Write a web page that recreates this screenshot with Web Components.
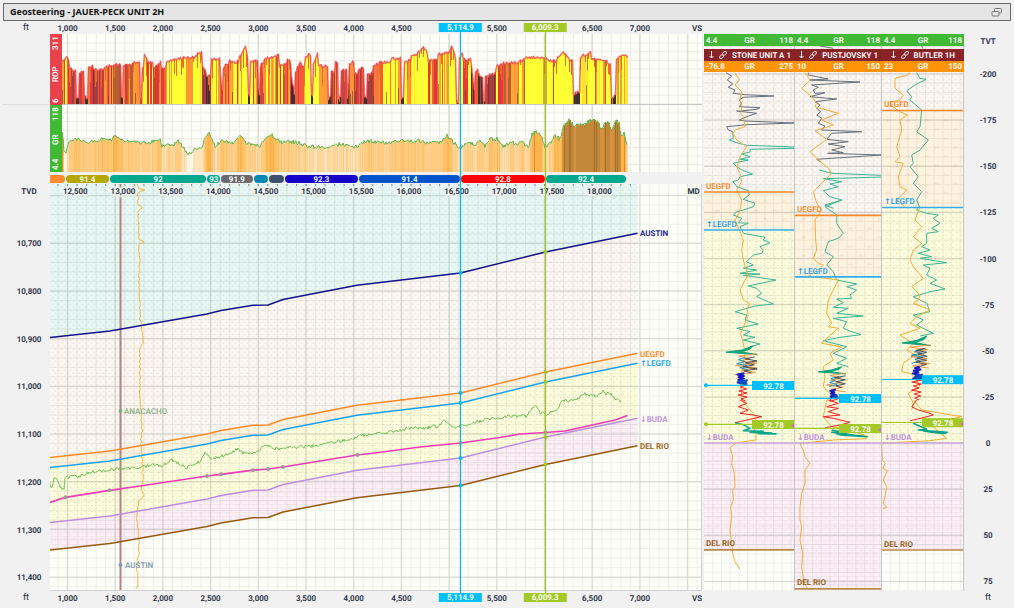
<!DOCTYPE html>
<html lang="en">
<head>
<meta charset="utf-8">
<title>Geosteering - JAUER-PECK UNIT 2H</title>
<style>
  body { margin: 0; background: #f1f1f1; color: #1d2b3e; font-family: Roboto, "Liberation Sans", sans-serif; font-size: 8px; font-weight: 600; text-rendering: geometricPrecision; }
</style>
</head>
<body>
<geo-app></geo-app>
<script>
/* ---------- helpers ---------- */
const f = n => +n.toFixed(1);
function rng(seed) { let s = seed; return () => (s = (s * 16807) % 2147483647) / 2147483647; }
const line = pts => pts.map((p, i) => (i ? 'L' : 'M') + f(p[0]) + ' ' + f(p[1])).join('');
const pairs = s => { const a = s.trim().split(/[\s,]+/).map(Number), o = []; for (let i = 0; i < a.length; i += 2) o.push([a[i], a[i + 1]]); return o; };
const path = (d, color, w = 1, extra = '') => `<path d="${d}" fill="none" stroke="${color}" stroke-width="${w}" vector-effect="non-scaling-stroke" stroke-linejoin="round" ${extra}/>`;
/* value of a polyline at x */
function at(pts, x) {
  for (let i = 1; i < pts.length; i++) if (x <= pts[i][0]) {
    const [a, b] = [pts[i - 1], pts[i]]; return a[1] + (b[1] - a[1]) * (x - a[0]) / (b[0] - a[0] || 1);
  }
  return pts[pts.length - 1][1];
}
/* resample with jitter, along x or along y */
function rough(pts, step, amp, seed, vertical) {
  const r = rng(seed), src = vertical ? pts.map(p => [p[1], p[0]]) : pts, out = [];
  for (let x = src[0][0]; x <= src[src.length - 1][0]; x += step) out.push([x, at(src, x) + (r() - .5) * 2 * amp]);
  return vertical ? out.map(p => [p[1], p[0]]) : out;
}
const gridLines = (x, y, w, h, xs, ys) => {
  let d = '';
  for (const v of xs) d += `M${f(v)} ${y}V${y + h}`;
  for (const v of ys) d += `M${x} ${f(v)}H${x + w}`;
  return d;
};
const series = (a, b, n) => { const o = []; for (let v = a; v < b; v += n) o.push(v); return o; };
/* a chart: stretched drawing plus texts placed in percent, so they keep their shape */
function chart([x, y, w, h], art, texts = []) {
  const py = v => ((v - y) / h * 100).toFixed(2) + '%';
  const arrow = s => s.replace(/[↑↓]/, m => `<tspan class="ar">${m}</tspan>`);
  const t = texts.map(o => `<text x="${((o.x - x) / w * 100).toFixed(2)}%" y="${py(o.y)}" dy="3" fill="${o.c || '#1d2b3e'}" text-anchor="${o.a || 'middle'}" ${o.e || ''}>${arrow(o.t)}</text>`).join('');
  return `<svg width="100%" height="100%"><svg width="100%" height="100%" viewBox="${x} ${y} ${w} ${h}" preserveAspectRatio="none">${art}</svg>${t}</svg>`;
}
const patterns = `<defs>
  <pattern id="dash" width="6" height="6" patternUnits="userSpaceOnUse"><path d="M0 1.5h3M3 4.5h3M1.5 0v1.5M4.5 3v1.5" stroke="#7d8a88" stroke-opacity=".1" stroke-width=".8"/></pattern>
  <pattern id="sand" width="7" height="6" patternUnits="userSpaceOnUse"><path d="M0 1.5h2M4 4.5h2M4 1.5h1" stroke="#857c50" stroke-opacity=".18" stroke-width=".8"/></pattern>
  <pattern id="tick" width="19" height="18" patternUnits="userSpaceOnUse"><path d="M4 5v-2h3v2M13 14v-2h3v2" fill="none" stroke="#85806a" stroke-opacity=".18" stroke-width=".8"/></pattern>
  <pattern id="brick" width="9" height="8" patternUnits="userSpaceOnUse"><path d="M0 .5h9M0 4.5h9M2 .5v4M6.500 4.5v4" stroke="#a08f9c" stroke-opacity=".13" stroke-width=".8"/></pattern>
</defs>`;
const FILL = { teal: '#e7f8f4', austin: '#fdf6f1', uegfd: '#fff2de', legfd: '#fefddd', buda: '#fdeff5', none: '#fffff9' };
const base = `<style>:host{display:block;min-width:0;min-height:0}svg{display:block;overflow:hidden}text{font:inherit}.ar{font-family:"DejaVu Sans",sans-serif}</style>`;
/* a chart element takes the size of its grid cell, never of its drawing */
const fillCell = '<style>:host{contain:size}</style>';
function define(name, render) {
  customElements.define(name, class extends HTMLElement {
    constructor() { super(); this.attachShadow({ mode: 'open' }); }
    connectedCallback() { this.shadowRoot.innerHTML = base + render(this); }
  });
}

/* ---------- title bar ---------- */
define('title-bar', () => `<style>
  :host{display:flex;align-items:center;justify-content:space-between;height:16px;margin:0 1px;padding:0 7px 0 6px;border:1px solid #6a6a6a;background:#e5e5e5;color:#111}
  h1{margin:0;font:bold 9px/16px "Noto Sans",sans-serif;text-rendering:auto}
  button{all:unset;display:block;width:12px;height:12px;cursor:pointer}
  </style><h1><slot></slot></h1>
  <button type="button" aria-label="Restore window"><svg viewBox="0 0 12 12" width="12" height="12" fill="#e5e5e5" stroke="#777"><rect x="3.500" y="2.500" width="7" height="4.500" rx="1"/><rect x="1" y="5.500" width="7" height="4.500" rx="1"/></svg></button>`);

/* ---------- vertical section axis ---------- */
define('vs-axis', () => {
  const texts = [];
  /* the values under the two cursor chips are left out */
  for (let i = 0; i < 13; i++) if (i !== 8 && i !== 10) texts.push({ x: 67.5 + i * 47.7, y: 28, t: (1000 + i * 500).toLocaleString('en-US') });
  texts.push({ x: 697, y: 28, t: 'VS' });
  return fillCell + `<style>:host{position:relative}
    b{position:absolute;top:2px;width:6.5%;height:9px;line-height:10px;transform:translateX(-50%);text-align:center;color:#fff;font-weight:600}
    .a{left:62.95%;background:#00bfff}.b{left:75.95%;background:#a3c926}</style>`
    + chart([50, 21, 652, 13], '', texts) + `<b class="a">5,114.9</b><b class="b">6,009.3</b>`;
});

/* ---------- left scale strip of a curve track ---------- */
define('curve-track', el => `<style>
  :host{display:grid;grid-template-columns:12px minmax(0,1fr)}
  .s{display:flex;justify-content:space-between;writing-mode:vertical-rl;transform:rotate(180deg);color:#fff;line-height:12px;padding:2px 0;background:${el.getAttribute('color')}}
  </style><div class="s"><span>${el.getAttribute('min')}</span><span>${el.getAttribute('name')}</span><span>${el.getAttribute('max')}</span></div>
  <slot></slot>`);

const majors = series(67.5, 702, 47.7), minors = series(58, 702, 9.54);
const trackGrid = (y, h, ys) => `<rect x="62" y="${y}" width="640" height="${h}" fill="#fffff9"/>`
  + path(gridLines(62, y, 640, h, minors, ys), '#ebebe4') + path(gridLines(62, y, 640, h, majors, []), '#dcdcd8', 1.5);

define('rop-plot', () => {
  /* from x, top at start, top at end, shade: y yellow, o orange, r red, d dark red, k black */
  const S = `62 61 58 oyr|65 57 60 ory|69 69 70 r|72 70 70 rd|76 98 96 k|79 73 70 rk|84 97 98 k|88 68 66 or|93 70 69 dr|104 68 64 ro|110 66 64 rdo|121 98 95 k|123 65 63 oro|130 64 61 o|140 98 88 r|142 68 64 oy|144 53 60 y|147 61 64 ory|153 68 62 oyr|161 69 67 or|166 62 59 yyo|176 59 57 y|186 58 57 yyyo|195 56 51 y|202 67 72 dr|206 76 74 kd|211 60 59 y|220 76 98 rk|223 67 62 or|229 60 64 yro|234 63 61 rory|239 57 46 y|246 52 60 y|248 94 97 k|250 63 60 ryo|258 88 99 k|260 66 61 r|263 62 54 oy|268 58 55 yo|279 66 62 yor|287 60 62 ro|291 78 99 k|295 72 63 rd|299 62 68 ro|305 58 53 y|309 54 60 y|311 96 98 k|313 64 51 y|318 65 64 yo|322 67 65 yoo|328 99 96 k|331 72 72 dr|335 62 64 or|338 98 96 k|341 70 69 rd|347 97 69 k|349 63 62 o|354 74 73 dr|358 69 68 dr|364 98 98 k|367 74 73 d|373 66 62 or|380 62 63 oyr|391 59 58 oy|401 99 98 k|404 63 59 ryo|411 57 53 y|417 53 46 y|424 48 55 y|428 62 58 yor|438 54 53 yyo|449 52 43 y|452 48 60 y|456 101 102 k|459 57 53 yo|463 60 59 yr|471 66 98 rk|475 71 68 r|478 74 79 kd|483 101 98 k|485 76 75 d|490 74 73 dkr|496 66 63 ory|504 63 63 o|519 62 58 yo|525 58 57 y|536 58 58 y|547 59 62 y|552 61 62 oyr|557 57 51 y|563 53 58 y|569 60 62 y|573 96 94 k|575 93 91 k|580 57 52 y|591 59 60 yo|600 60 62 yyo|608 63 64 y|611 98 95 k|616 58 55 y|624 55 58 yyo`.split('|').map(s => s.split(' '));
  const C = { y: ['#ffff33', '#ffff33', '#ffff33', '#ffff33', '#ffff33', '#ffff33', '#ffff33', '#ffe033', '#e3a43a'], o: ['#ff9433', '#ffa03a', '#f87c38', '#ffb03a', '#ff9433', '#b5602f'], r: ['#e8383c', '#f25a3a', '#d83a3a', '#e04040'], d: ['#b03a3a', '#a04040', '#c94444', '#7a3636'], k: ['#333', '#403030', '#4b3030'] };
  const r = rng(77); let bars = '', top = [];
  S.forEach((s, i) => {
    const x0 = +s[0], x1 = i + 1 < S.length ? +S[i + 1][0] : 628;
    let c = '';
    for (let x = x0; x < x1; x++) {
      const y = +s[1] + (s[2] - s[1]) * (x - x0) / (x1 - x0) + (r() - .5) * 3;
      /* neighbouring samples often share one shade */
      if (!c || r() < .6) { const sh = C[s[3][Math.floor(r() * s[3].length)]]; c = sh[Math.floor(r() * sh.length)]; }
      bars += `<rect x="${x}" y="${f(y)}" width="1.050" height="${f(105 - y)}" fill="${c}"/>`;
      if (r() < .2) bars += `<rect x="${x}" y="${f(y)}" width="1" height="${f(5 + r() * 14)}" fill="#ee6a33"/>`;
      if (r() < .03 && y < 90) bars += `<rect x="${x}" y="${f(y + 30)}" width="1" height="${f(75 - y)}" fill="#5a4030" opacity=".6"/>`;
      top.push([x + .5, y]);
    }
  });
  return fillCell + chart([62, 34, 640, 71], trackGrid(34, 71, series(43, 104, 8.7)) + `<g shape-rendering="crispEdges">${bars}</g>`
    + path(line(top), '#ec4a4e', 1.5, 'opacity=".8"') + path('M62 104.500H702', '#c4c4c4'));
});

define('gr-plot', () => {
  const P = pairs(`62 134 63 140 64 150 65.500 155 67 146 70 142 75 139 85 142 95 141 104 138 112 139 115 136 120 140 130 141 137 142 145 143 155 141 160 139 162 146 175 144 178 140 182 146 188 155 193 150 202 148 206 135 209 134 215 146 222 141 232 143 240 137 248 144 256 145 260 146 266 137 271 134 280 142 290 142 300 143 310 147 325 147 340 144 355 147 365 142 372 141 385 143 393 142 405 141 420 141 428 143 440 142 447 136 452 141 458 147 461 147 466 143 475 144 480 140 485 147 490 139 497 139 503 147 512 142 517 145 521 141 528 148 532 135 536 131 541 136 545 147 550 143 555 136 560 139 563 128 569 119 574 127 580 124 590 121 592 119 598 122 601 129 607 120 612 130 616 120 619 124 621 136 624 133 627 143`);
  const pts = rough(P, 1, 2, 9), r = rng(5);
  const bars = pts.map(([x, y]) => {
    const v = y + (r() - .5) * 3;
    const c = v > 151 ? '#fff5e6' : v > 147 ? '#ffe3ba' : v > 143.5 ? '#ffd699' : v > 140 ? '#ffcb80' : v > 137 ? '#ffc067' : v > 132 ? '#fdb44b' : v > 126 ? '#d4913f' : r() < .2 ? '#a3702d' : '#c3873a';
    return `<rect x="${x}" y="${f(y)}" width="1.050" height="${f(172 - y)}" fill="${c}"/>`;
  }).join('');
  return fillCell + chart([62, 105, 640, 67], trackGrid(105, 67, series(113, 171, 8.6)) + `<g shape-rendering="crispEdges">${bars}</g>`
    + path(line(pts), '#5fb84c', 1));
});

/* ---------- dip ribbon ---------- */
define('dip-ribbon', () => {
  const seg = [[15, '#ff8c2e', ''], [44, '#b3a700', '91.4'], [98, '#00a98d', '92'], [13, '#00a98d', '93'], [32, '#6a6a6e', '91.9'], [15, '#0089b5', ''], [15, '#3b5169', ''], [74, '#1405c8', '92.3'], [103, '#0054c9', '91.4'], [85, '#f00', '92.8'], [82, '#00a98d', '92.4'], [75, 'none', '']];
  return `<style>:host{display:flex;padding:3px 0 1px;overflow:hidden}
    span{flex-basis:0;min-width:0;height:8px;line-height:9px;color:#fff;text-align:center;border-radius:4px;margin-right:1px;white-space:nowrap}
    span:first-of-type{border-radius:0 4px 4px 0}</style>`
    + seg.map(s => `<span style="flex-grow:${s[0]};background:${s[1]}">${s[2]}</span>`).join('');
});

/* ---------- cross section ---------- */
define('cross-section', () => {
  const A = pairs(`50 337.500 110 331 207 314 221 310.500 253 305.300 268 305 283 299.500 357 285.300 460.500 273 545.500 252 637.500 233.300`);
  const sh = d => A.map(p => [p[0], p[1] + d]);
  const band = (a, b, c, pat) => { const d = line(a.concat([...b].reverse())) + 'Z'; return `<path d="${d}" fill="${c}"/><path d="${d}" fill="url(#${pat})"/>`; };
  const U = sh(120), L = sh(130), B = sh(185), D = sh(212.5);
  const well = pairs(`50 502.500 65.500 497.300 110 490.300 140 486 207 476 221 474.300 253 470.200 268 469 283 467 357 455 375 453 420 447 460.500 443 500 437.500 520 434 545.500 432.500 565 431 590 425.500 615 420 627.500 415.500`);
  const gr = pairs(`50 485 52 489 54 478 56 478 60 487 64 489 65 478 70 477 80 476 90 472 100 471 115 469 130 468 143 467 155 464 162 466 172 460 180 464 187 468 195 463 200 462 205 452 212 459 222 456 230 454 237 449 243 453 256 453 263 446 267 445 275 449 290 447 305 447 325 444 338 441 352 440 358 436 370 434 385 433 397 431 410 428 425 428 437 426 445 421 455 428 460 426 470 424 480 421 490 418 500 419 510 416 520 416 527 416 531 410 534 405 540 412 546 415 552 411 558 408 562 400 570 401 578 398 585 394 592 396 600 395 603 391 606 395 608 391 615 399 621 401`);
  const off = pairs(`138 184 139 189 145 190 138 192 138 205 143 207 138 211 139 240 146 242 139 244 139 250 140 265 139 275 140 320 142 330 143 344 140 347 140 400 142 430 141 440 143 470 140 473 144 474 141 490 144 496 139 500 137 510 138 530 139 550 137 570 138 587 135 590`);
  const ys = series(195.6, 591, 9.54), yM = series(195.6, 591, 47.7);
  let ticks = ''; for (const x of minors) if (x < 632) ticks += `M${f(x)} 184v2`;
  const dots = (pts, c) => pts.map(p => path(`M${p[0]} ${p[1]}h.01`, c, 4, 'stroke-linecap="round"')).join('');
  const art = patterns + `<rect x="50" y="184" width="652" height="407" fill="${FILL.none}"/>`
    + band([[50, 184], [637.5, 184]], A, FILL.teal, 'dash') + band(A, U, FILL.austin, 'dash') + band(U, L, FILL.uegfd, 'tick') + band(L, B, FILL.legfd, 'sand') + band(B, D, FILL.buda, 'brick')
    + path(gridLines(50, 184, 652, 407, minors, ys), '#64706a', 1, 'opacity=".1"') + path(gridLines(50, 184, 652, 407, majors, yM), '#64706a', 1.5, 'opacity=".15"')
    + path(ticks, '#888')
    + path('M120.500 184V591', '#b98080', 2)
    + path(line(rough(off, 1.5, .8, 31, true)), '#f9b13c') + path(line(rough(gr, 1, 1.6, 12)), '#74c461')
    + path(line(A), '#12128a', 1.5) + path(line(U), '#f98a2c', 1.5) + path(line(L), '#18a3f0', 1.5) + path(line(B), '#bd8ee0', 1.5) + path(line(D), '#96590f', 1.5)
    + path(line(well), '#f03cb4', 1.7)
    + dots(pairs('65.5 497.3 109.5 490.3 207 476 221 474.3 253 470.2 268 469 283 467 357.5 455 460.5 443 545.5 432.5'), '#999')
    + dots([273, 393, 403, 458, 485.5].map(y => [460.5, y]), '#00bfff') + dots([252, 372, 382, 437, 464.5].map(y => [545.5, y]), '#a3c926')
    + dots([[120.5, 411]], '#7fae7f') + dots([[120.5, 565]], '#8499b5') + path('M50 590.500H702M701.500 184V591', '#d0d0d0');
  const halo = 'stroke="#eff3ee" stroke-opacity=".8" stroke-width="4" stroke-linejoin="round" paint-order="stroke"';
  const texts = [];
  for (let i = 0; i < 12; i++) texts.push({ x: 75.3 + i * 47.65, y: 191, t: (12500 + i * 500).toLocaleString('en-US'), e: halo });
  texts.push({ x: 693.5, y: 191, t: 'MD', e: halo },
    { x: 640, y: 233.5, t: 'AUSTIN', c: '#12128a', a: 'start' }, { x: 640, y: 353.5, t: 'UEGFD', c: '#f98a2c', a: 'start' },
    { x: 640, y: 363.5, t: '↑LEGFD', c: '#18a3f0', a: 'start' }, { x: 640, y: 418.5, t: '↓BUDA', c: '#bd8ee0', a: 'start' },
    { x: 640, y: 446, t: 'DEL RIO', c: '#96590f', a: 'start' }, { x: 124, y: 411, t: 'ANACACHO', c: '#8fb38f', a: 'start' }, { x: 125, y: 565.5, t: 'AUSTIN', c: '#8499b5', a: 'start' });
  return fillCell + chart([50, 184, 652, 407], art, texts);
});

define('tvd-axis', () => {
  const texts = [{ x: 29, y: 191, t: 'TVD' }];
  for (let i = 0; i < 8; i++) texts.push({ x: 29, y: 243.3 + i * 47.7, t: (10700 + i * 100).toLocaleString('en-US') });
  return fillCell + chart([2, 184, 48, 407], '', texts);
});
define('tvt-axis', () => {
  const texts = [{ x: 988, y: 41, t: 'TVT' }];
  for (let i = 0; i < 12; i++) texts.push({ x: 988, y: 74 + i * 46.13, t: String(-200 + i * 25) });
  return fillCell + chart([964, 34, 48, 557], '', texts);
});
define('axis-unit', () => `<style>:host{padding-top:2px;line-height:10px;font-size:9px;font-weight:400;text-align:center}</style><slot></slot>`);

/* cursors run across every row of the plot column */
define('depth-cursors', () => fillCell + `<style>:host{pointer-events:none}</style>`
  + chart([50, 21, 652, 587], path('M460.500 32V595', '#00b4f5', 1.2) + path('M545.500 32V595', '#9cc41f', 1.2)));

/* ---------- type logs ---------- */
/* samples are in thirds of a unit; each piece starts at its own depth origin */
const LOGS = {
  stone: { x: 704, w: 91, marks: [192, 230, 443, 549.8], cur: [385.3, 424.3], box: 752, dot: true,
    grey: [[0, '78,218 95,228 82,240 98,252 85,262 105,270 100,280 135,284 222,288 130,292 118,300 125,310 118,320 180,323 170,328 115,334 110,333 170,340 145,348 118,360 135,363 283,369 140,374 80,380 85,390 98,395']],
    teal: [[0, '98,395 100,415 88,420 110,428 140,436 283,441 283,445 150,448 150,456 125,462 150,470 120,478 145,480 100,490 110,500 130,512 158,522 120,530 115,540 98,545 105,552 110,560 145,572 148,585 130,598 165,610 160,620 130,630'], [200, '130,30 110,35 100,45 125,55 115,68 145,70 120,80 125,90 130,100 195,112 190,120 210,128 180,140 190,150 185,160 160,165 140,185 160,195 130,205 170,210 120,220 180,222 130,226 228,240 145,258 170,265 185,280 170,290 220,312 165,318 105,335 140,345 135,360 175,372 110,385 150,395 130,405 165,412 130,420 180,432 150,440']],
    mix: [78, 172, 138, 438, 555, 112, 150], red: '120,0 140,10 115,20 145,30 120,40 160,45 185,50 150,58 105,68', tail: '105,68 130,74 150,85 130,92 190,94 150,97 228,102 175,101 215,99 180,97 230,102',
    orange: [[0, '105,218 118,240 105,255 125,275 120,300 125,320 122,340 130,350 135,380 105,390 100,400 110,420 140,440 120,470 115,490 110,500 120,520 125,545 110,570 125,600 120,630'], [200, '122,30 105,60 118,90 130,120 125,150 130,180 140,215 145,225 135,240 120,270 130,300 150,312 140,325 145,345 135,370 122,400 130,430 135,460 130,500 120,540 125,580'], [400, '125,-20 125,0 150,30 168,50 160,80 168,100 168,120 110,128 90,143 98,170 95,190 103,220 105,260 98,268 100,300 92,320 95,350 90,390 95,430 98,460 105,485 120,508']] },
  push: { x: 795, w: 87, marks: [215.3, 276.8, 443, 588.8], cur: [398.3, 428.3], box: 839,
    grey: [[0, '360,138 400,145'], [0, '325,218 325,225 385,237 330,240 480,246 335,255 355,262 340,270 345,280 375,278 330,290 410,297 345,305 360,315 350,325 362,335 350,345 365,355 355,370 375,378 365,390 485,395 395,400 380,418 445,425 385,432 435,440 395,450 430,458 383,460 545,465 350,478 365,488']],
    teal: [[0, '358,510 395,520 545,526 545,531 370,536 425,545 390,552 415,560 370,572 390,590 425,600 375,615 400,625'], [200, '425,0 375,20 410,45 410,70 430,100 415,115 385,125 375,155 400,170 380,195 400,215 410,240 470,252 440,260 470,270 450,285 455,295 410,297 430,308 400,322 445,325 410,340 490,348 400,355 440,365 430,385 455,395 483,404 420,412 370,422 440,440 400,460 440,475 410,490 445,500']],
    mix: [355, 438, 405, 500, 598, 376, 415], red: '385,0 415,10 380,20 415,25 385,35 420,45 370,50 400,55 450,67 420,75 375,83', tail: '395,90 440,100 395,97 500,110 420,105 490,108 410,102 470,107',
    orange: [[0, '315,218 330,240 305,265 335,290 350,310 345,320 415,340 365,360 400,375 345,392 380,418 330,455 350,475 385,505 395,520 340,575 350,610 365,630'], [200, '365,30 345,60 347,120 350,150 340,175 355,190 370,195 360,205 325,228 415,240 405,260 385,300 380,340 395,370 385,380 415,385 380,415 365,430 425,440 390,460 400,480 370,500 375,530 370,560 400,590'], [400, '390,-10 380,0 370,50 395,80 450,90 505,110 500,116 400,120 320,128 300,132 310,150 315,170 330,190 315,210 315,250 305,280 300,320 300,360 305,380 300,420 308,460 305,500 312,550 328,570']] },
  butler: { x: 882, w: 82, marks: [110.5, 207.5, 443, 550], cur: [379.5, 422.5], box: 922,
    grey: [[0, '665,138 668,145']],
    teal: [[0, '650,218 660,235 678,238 645,255 620,272 635,290 630,300 665,330 660,380 650,395 685,420 660,450 635,465 640,490 630,500 655,530 640,550 665,575 650,600 660,625'], [200, '655,20 650,30 680,40 715,45 700,55 720,70 695,85 715,95 680,100 680,130 665,140 690,150 655,160 695,170 660,175 740,188 670,195 690,205 680,225 710,240 690,250 735,267 690,275 640,290 680,310 690,335 640,345 670,360 650,375 700,400 660,408']],
    mix: [606, 692, 660, 408, 540, 634, 668], red: '650,0 635,20 655,30 690,40 700,45 650,58 630,62', tail: '640,70 680,88 655,90 742,97 690,96 730,101 670,93 740,99',
    orange: [[0, '630,218 620,226 585,235 585,265 610,285 600,300 570,306 575,318 600,335 622,345 600,360 605,390 590,440 600,470 585,485 610,490 595,530 600,560 620,570 590,600 615,620'], [200, '660,20 645,60 665,80 640,110 665,130 640,150 630,180 640,200 670,235 635,260 660,285 655,300 640,310 690,330 650,350 630,370 660,385 600,405 640,430 620,450 645,465 610,490 605,515 630,520 650,540 660,560 625,580 640,610 635,630'], [400, '640,0 665,30 785,50 740,60 700,80 740,115 690,122 545,130 547,180 556,190 548,205 562,212 550,240 560,260 555,290 550,310 560,322 550,326']] }
};
define('type-log', el => {
  const g = LOGS[el.getAttribute('log')], { x, w } = g, [u, l, b, d] = g.marks, R = x + w;
  const cv = ([oy, s]) => line(pairs(s).map(p => [700 + p[0] / 3, oy + p[1] / 3]));
  const zone = (a, c, col, pat) => `<rect x="${x}" y="${a}" width="${w}" height="${f(c - a)}" fill="${col}"/>` + (pat ? `<rect x="${x}" y="${a}" width="${w}" height="${f(c - a)}" fill="url(#${pat})"/>` : '');
  const [m0, m1, mc, y0, y1, r0, r1] = g.mix, r = rng(x), zig = (a, c, lo, hi, st, col, wd) => {
    let s = [], side = 0; for (let y = a; y < c; y += st) { side = !side; s.push([700 + (side ? hi - r() * (hi - lo) * .35 : lo + r() * (hi - lo) * .35) / 3, 200 + y / 3]); }
    return path(line(s), col, wd);
  };
  const q = (y1 - y0) / 100;
  const mix = `<path d="${line([[mc + 20, y0], [mc - 10, y0 + 10 * q], [m0, y0 + 16 * q], [m1, y0 + 22 * q], [mc - 15, y0 + 15 * q], [mc + 12, y0 + 8 * q]].map(p => [700 + p[0] / 3, 200 + p[1] / 3]))}Z" fill="#08a37a" stroke="#08a37a"/>`
    + zig(y0 + 20 * q, y0 + 78 * q, m0 + 24, m1, 7, '#f0964a', 1) + zig(y0 + 30 * q, y0 + 65 * q, m0 + 26, m1 - 20, 6, '#1d8fb5', 1) + zig(y0 + 28 * q, y0 + 70 * q, m0 + 40, m1, 6, '#4a4f5c', 1)
    + zig(y0 + 70 * q, y1, m0 + 30, mc + 4, 4, '#1616c4', 2) + zig(y0 + 88 * q, y1, m0 + 34, m0 + 66, 3, '#0a4ec4', 2)
    + zig(y1, 605, r0, r1, 6, '#f42020', 1);
  const ms = [[u, '#f98a2c'], [l, '#35aef0'], [b, '#cdaae6'], [d, '#b98a4a']];
  const cursor = (y, c) => path(`M${x} ${y}H${R}`, c, 1.2) + (g.dot ? path(`M706 ${y}h.01`, c, 4, 'stroke-linecap="round"') : '') + `<rect x="${g.box}" y="${f(y - 4.3)}" width="${R - g.box}" height="9" fill="${c}"/>`;
  const art = patterns + zone(34, u, FILL.austin, 'dash') + zone(u, l, FILL.uegfd, 'tick') + zone(l, b, FILL.legfd, 'sand') + zone(b, d, FILL.buda, 'brick') + zone(d, 591, FILL.none)
    + path(gridLines(x, 34, w, 557, series(x + 8.7, R, 8.7), series(37.1, 591, 9.226)), '#64706a', 1, 'opacity=".1"') + path(gridLines(x, 34, w, 557, [], series(74, 591, 46.13)), '#64706a', 1.5, 'opacity=".16"')
    + g.grey.map(c => path(cv(c), '#63707c', 1)).join('') + g.teal.map(c => path(cv(c), '#36b795', 1)).join('')
    + g.orange.map(c => path(cv(c), '#f9ab35', 1)).join('') + mix + path(cv([400, g.red]), '#f42020', 1) + path(cv([400, g.tail]), '#08a38a', 1.5)
    + ms.map(m => path(`M${x} ${m[0]}H${R}`, m[1], 1.7)).join('')
    + cursor(g.cur[0], '#00bfff') + cursor(g.cur[1], '#a3c926')
    + `<path d="M${R} ${g.cur[1] - 1}v5l-4-2.500z" fill="#f058c0"/>`
    + path(`M${R - .5} 34V591`, '#c4c4c8');
  const tx = x + 2, texts = [['UEGFD', u, '#f98a2c'], ['↑LEGFD', l, '#18a3f0'], ['↓BUDA', b, '#bd8ee0'], ['DEL RIO', d, '#96590f']].map(a => ({ x: tx, y: a[1] - 6.3, t: a[0], c: a[2], a: 'start' }));
  for (const y of g.cur) texts.push({ x: (g.box + R) / 2, y: y + .7, t: '92.78', c: '#fff' });
  return `<style>
    :host{display:grid;grid-template:13px minmax(0,1fr) 17px/minmax(0,1fr)}
    .plot,.head{grid-area:2/1}.plot{contain:size}
    .head{align-self:start;color:#fff;position:relative}
    .row{display:flex;justify-content:space-between;height:12px;line-height:13px;padding:0 2px;white-space:nowrap}
    .row>span{flex:1}.row>span:nth-child(2){text-align:center}.row>span:last-child{text-align:right}
    .g{background:#40b935}.m{background:#8a2328;margin-top:3px;justify-content:flex-end;align-items:center;gap:5px;padding:0 ${el.getAttribute('log') === 'butler' ? 9 : 4}px 0 0}
    .o{background:#ff9408;height:11px;line-height:12px}
  </style><div class="plot">${chart([x, 34, w, 557], art, texts)}</div>
  <div class="head"><div class="row g"><span>4.4</span><span>GR</span><span>118</span></div>
  <div class="row m"><svg width="5" height="8" viewBox="0 0 5 8" fill="none" stroke="#fff"><path d="M2.500 0v7M.5 5l2 2 2-2"/></svg>
  <svg width="8" height="8" viewBox="0 0 16 16" fill="none" stroke="#e8cfd0" stroke-width="2"><rect x="6.500" y="2" width="9" height="5.500" rx="2.700" transform="rotate(-45 11 5)"/><rect x=".5" y="8.500" width="9" height="5.500" rx="2.700" transform="rotate(-45 5 11)"/></svg>
  <slot></slot></div>
  <div class="row o"><span>${el.getAttribute('min')}</span><span>GR</span><span>${el.getAttribute('max')}</span></div></div>`;
});

/* ---------- page ---------- */
define('geo-app', () => `<style>
  :host{display:flex;flex-direction:column;box-sizing:border-box;min-height:100vh;padding:3px 2px 0}
  main{flex:1;min-height:480px;display:grid;grid-template:13px minmax(0,71fr) minmax(0,67fr) 12px minmax(0,407fr) 17px/48px minmax(0,652fr) 2px minmax(0,260fr) 48px}
  .c1{grid-column:1}.c2{grid-column:2}.c5{grid-column:5}
  .r1{grid-row:1}.r2{grid-row:2}.r3{grid-row:3}.r4{grid-row:4}.r5{grid-row:5}.r6{grid-row:6}
  .sep{border-bottom:1px solid #dedede}
  depth-cursors{grid-area:1/2/7/3;z-index:1}
  vs-axis{z-index:2}vs-axis.r6{height:13px}
  .logs{grid-area:1/4/7/5;display:grid;grid-template-columns:minmax(0,91fr) minmax(0,87fr) minmax(0,82fr)}
  tvt-axis{grid-area:2/5/6/6}
  </style>
  <title-bar>Geosteering - JAUER-PECK UNIT 2H</title-bar>
  <main>
    <axis-unit class="c1 r1">ft</axis-unit><vs-axis class="c2 r1"></vs-axis>
    <div class="c1 r2 sep"></div>
    <curve-track class="c2 r2" color="#e8434a" min="6" name="ROP" max="311"><rop-plot></rop-plot></curve-track>
    <curve-track class="c2 r3" color="#40b935" min="4.4" name="GR" max="118"><gr-plot></gr-plot></curve-track>
    <dip-ribbon class="c2 r4"></dip-ribbon>
    <tvd-axis class="c1 r5"></tvd-axis><cross-section class="c2 r5"></cross-section>
    <axis-unit class="c1 r6">ft</axis-unit><vs-axis class="c2 r6"></vs-axis>
    <depth-cursors></depth-cursors>
    <div class="logs">
      <type-log log="stone" min="-76.8" max="275">STONE UNIT A 1</type-log>
      <type-log log="push" min="10" max="150">PUSTJOVSKY 1</type-log>
      <type-log log="butler" min="23" max="150">BUTLER 1H</type-log>
    </div>
    <tvt-axis></tvt-axis><axis-unit class="c5 r6">ft</axis-unit>
  </main>`);
</script>
</body>
</html>
